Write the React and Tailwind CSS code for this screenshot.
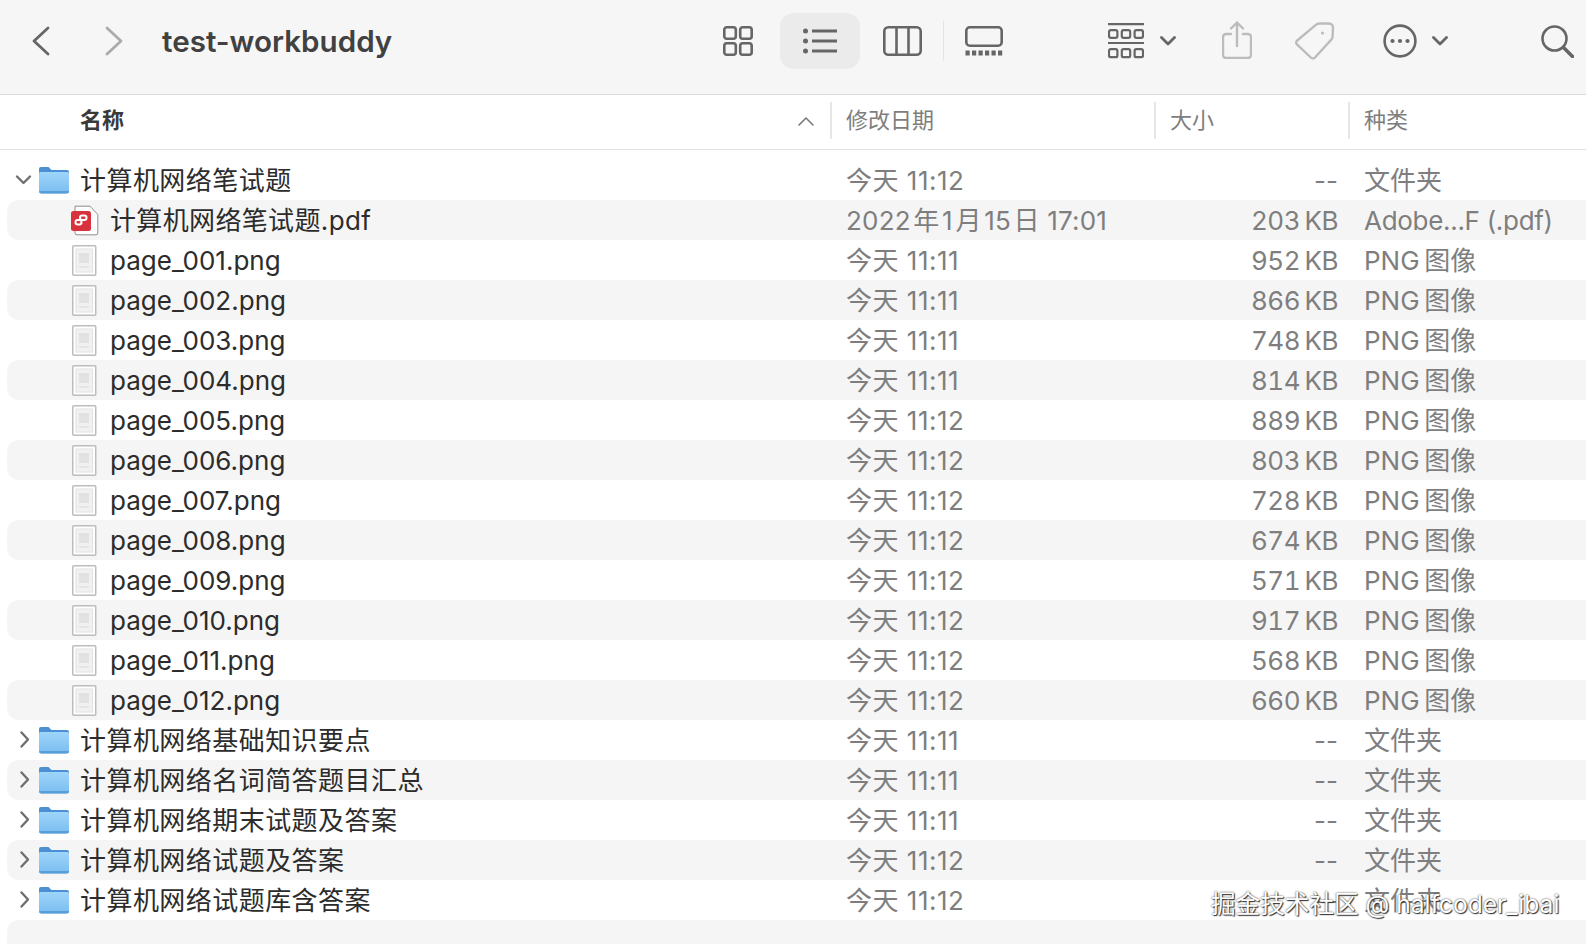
const FONT = '"Inter","Noto Sans CJK SC",sans-serif';

const rows = [
  { t: "folder", open: true, n: "计算机网络笔试题", d: "今天 11:12", s: "--", k: "文件夹" },
  { t: "pdf", n: "计算机网络笔试题.pdf", d: "2022\u200A年\u200A1\u200A月\u200A15\u200A日 17:01", s: "203\u2009KB", k: "Adobe...F (.pdf)" },
  { t: "png", n: "page_001.png", d: "今天 11:11", s: "952\u2009KB", k: "PNG\u2009图像" },
  { t: "png", n: "page_002.png", d: "今天 11:11", s: "866\u2009KB", k: "PNG\u2009图像" },
  { t: "png", n: "page_003.png", d: "今天 11:11", s: "748\u2009KB", k: "PNG\u2009图像" },
  { t: "png", n: "page_004.png", d: "今天 11:11", s: "814\u2009KB", k: "PNG\u2009图像" },
  { t: "png", n: "page_005.png", d: "今天 11:12", s: "889\u2009KB", k: "PNG\u2009图像" },
  { t: "png", n: "page_006.png", d: "今天 11:12", s: "803\u2009KB", k: "PNG\u2009图像" },
  { t: "png", n: "page_007.png", d: "今天 11:12", s: "728\u2009KB", k: "PNG\u2009图像" },
  { t: "png", n: "page_008.png", d: "今天 11:12", s: "674\u2009KB", k: "PNG\u2009图像" },
  { t: "png", n: "page_009.png", d: "今天 11:12", s: "571\u2009KB", k: "PNG\u2009图像" },
  { t: "png", n: "page_010.png", d: "今天 11:12", s: "917\u2009KB", k: "PNG\u2009图像" },
  { t: "png", n: "page_011.png", d: "今天 11:12", s: "568\u2009KB", k: "PNG\u2009图像" },
  { t: "png", n: "page_012.png", d: "今天 11:12", s: "660\u2009KB", k: "PNG\u2009图像" },
  { t: "folder", n: "计算机网络基础知识要点", d: "今天 11:11", s: "--", k: "文件夹" },
  { t: "folder", n: "计算机网络名词简答题目汇总", d: "今天 11:11", s: "--", k: "文件夹" },
  { t: "folder", n: "计算机网络期末试题及答案", d: "今天 11:11", s: "--", k: "文件夹" },
  { t: "folder", n: "计算机网络试题及答案", d: "今天 11:12", s: "--", k: "文件夹" },
  { t: "folder", n: "计算机网络试题库含答案", d: "今天 11:12", s: "--", k: "文件夹" },
];

const Folder = () => (
  <svg width="30" height="28" viewBox="0 0 30 28" className="shrink-0">
    <defs>
      <linearGradient id="fb" x1="0" y1="0" x2="0" y2="1">
        <stop offset="0" stopColor="#9ed5fa" />
        <stop offset="1" stopColor="#79bdf0" />
      </linearGradient>
    </defs>
    <path d="M0 3a2 2 0 0 1 2-2h7.5l3 3H28a2 2 0 0 1 2 2v6H0z" fill="#4a90d2" />
    <path d="M0 7.5a1.5 1.5 0 0 1 1.5-1.5h27A1.5 1.5 0 0 1 30 7.5V25a2.5 2.5 0 0 1-2.5 2.5h-25A2.5 2.5 0 0 1 0 25z" fill="url(#fb)" />
    <path d="M0 25V25a2.5 2.5 0 0 0 2.5 2.5h25A2.5 2.5 0 0 0 30 25z" fill="#5a9ed8" />
  </svg>
);

const PngIcon = () => (
  <svg width="25" height="31" viewBox="0 0 25 31" className="shrink-0">
    <rect x="0.75" y="0.75" width="23" height="29.5" rx="1" fill="#fff" stroke="#bdbdbd" strokeWidth="1.5" />
    <rect x="4" y="4" width="16.5" height="23" fill="#f1f1f1" stroke="#e2e2e2" strokeWidth="1" />
    <rect x="7" y="8" width="10" height="10" fill="#e2e2e2" />
    <rect x="7" y="21" width="10" height="2" fill="#e4e4e4" />
  </svg>
);

const PdfIcon = () => (
  <svg width="29" height="31" viewBox="0 0 29 31" className="shrink-0">
    <path d="M5 1.2h15l7.8 8.3V28a1.8 1.8 0 0 1-1.8 1.8H7A2 2 0 0 1 5 28z" fill="#fff" stroke="#8c8c8c" strokeWidth="1" />
    <rect x="1" y="6" width="20" height="20" rx="2.5" fill="#d8323c" />
    <g fill="none" stroke="#fff" strokeWidth="2">
      <rect x="10" y="10.5" width="6.5" height="4.5" rx="2.2" />
      <rect x="5.5" y="15" width="6" height="4.5" rx="2.2" />
    </g>
  </svg>
);

const Chevron = ({ open }) => (
  <svg width="20" height="20" viewBox="0 0 20 20" className="shrink-0" fill="none" stroke="#6f6f6f" strokeWidth="2.4" strokeLinecap="round" strokeLinejoin="round">
    {open ? <path d="M3 6.5l6.5 6.5L16 6.5" /> : <path d="M7.5 2.5L14 9.5l-6.5 7" />}
  </svg>
);

const Row = ({ r, i }) => (
  <div className={`ml-[7px] flex h-10 items-center rounded-l-[12px] ${i % 2 === 1 ? "bg-[#f5f5f5]" : "bg-white"}`}>
    <div className="flex w-[839px] items-center">
      {r.t === "folder" ? (
        <>
          <div className="flex w-[32px] justify-center pl-[1px]"><Chevron open={r.open} /></div>
          <Folder />
          <span className="ml-[11px] text-[26px] tracking-[0.45px] text-[#2c2c2c]">{r.n}</span>
        </>
      ) : (
        <>
          <div className={r.t === "pdf" ? "ml-[63px] w-[40px]" : "ml-[65px] w-[38px]"}>
            {r.t === "pdf" ? <PdfIcon /> : <PngIcon />}
          </div>
          <span className={`text-[26px] text-[#2c2c2c] ${r.t === "pdf" ? "tracking-[0.35px]" : ""}`}>{r.n}</span>
        </>
      )}
    </div>
    <div className={`w-[300px] text-[26px] text-[#7e7e7e] ${r.t === "pdf" ? "tracking-[0.2px]" : "tracking-[0.5px]"}`}>{r.d}</div>
    <div className={`w-[192px] text-right text-[26px] text-[#7e7e7e] ${r.s === "--" ? "" : "tracking-[-0.45px] tabular-nums"}`}>{r.s}</div>
    <div className={`pl-[26px] text-[26px] text-[#7e7e7e] ${r.t === "pdf" ? "tracking-[-0.3px]" : ""}`}>{r.k}</div>
  </div>
);

const stroke = { fill: "none", stroke: "currentColor", strokeWidth: 2.6 };

const Toolbar = () => (
  <div className="box-border flex h-[95px] items-center border-b border-[#dcdcdc] bg-[#f6f6f6] pb-[12px] pl-[32px] text-[#666666]">
    <svg width="18" height="30" viewBox="0 0 18 30" {...stroke} strokeWidth="2.8" strokeLinecap="round" strokeLinejoin="round"><path d="M16 2L2 15l14 13" /></svg>
    <svg width="18" height="30" viewBox="0 0 18 30" {...stroke} strokeWidth="2.8" strokeLinecap="round" strokeLinejoin="round" className="ml-[55px] text-[#ababab]"><path d="M2 2l14 13L2 28" /></svg>
    <div className="mt-[1px] ml-[39px] w-[561px] text-[29.6px] leading-none font-semibold text-[#414141]">test-workbuddy</div>
    <svg width="30" height="30" viewBox="0 0 30 30" {...stroke}><rect x="1.3" y="1.3" width="11.5" height="11.5" rx="2.5" /><rect x="17.2" y="1.3" width="11.5" height="11.5" rx="2.5" /><rect x="1.3" y="17.2" width="11.5" height="11.5" rx="2.5" /><rect x="17.2" y="17.2" width="11.5" height="11.5" rx="2.5" /></svg>
    <div className="ml-[27px] flex h-[56px] w-[80px] items-center justify-center rounded-[14px] bg-[#ebebeb]">
      <svg width="34" height="26" viewBox="0 0 34 26"><g fill="currentColor"><circle cx="2.5" cy="3" r="2.5" /><circle cx="2.5" cy="13" r="2.5" /><circle cx="2.5" cy="23" r="2.5" /></g><g stroke="currentColor" strokeWidth="2.8"><path d="M9 3h25M9 13h25M9 23h25" /></g></svg>
    </div>
    <svg width="39" height="30" viewBox="0 0 39 30" {...stroke} className="ml-[23px]"><rect x="1.3" y="1.3" width="36.4" height="27.4" rx="4" /><path d="M13.5 1.3v27.4M25.5 1.3v27.4" /></svg>
    <div className="ml-[21px] h-[40px] w-px bg-[#e4e4e4]" />
    <svg width="38" height="30" viewBox="0 0 38 30" className="ml-[21px]"><rect x="1.3" y="1.3" width="35.4" height="18.4" rx="3.5" fill="none" stroke="currentColor" strokeWidth="2.6" /><g fill="currentColor"><rect x="0.5" y="24.5" width="4.2" height="5" /><rect x="7" y="24.5" width="4.2" height="5" /><rect x="13.5" y="24.5" width="4.2" height="5" /><rect x="20" y="24.5" width="4.2" height="5" /><rect x="26.5" y="24.5" width="4.2" height="5" /><rect x="33" y="24.5" width="4.2" height="5" /></g></svg>
    <svg width="36" height="36" viewBox="0 0 36 36" className="ml-[105px]" fill="none" stroke="currentColor" strokeWidth="2.2"><path d="M0 1.2h36M0 20h36" /><g><rect x="1" y="7.2" width="8.4" height="7.6" rx="1.8" /><rect x="13.8" y="7.2" width="8.4" height="7.6" rx="1.8" /><rect x="26.6" y="7.2" width="8.4" height="7.6" rx="1.8" /><rect x="1" y="26.2" width="8.4" height="8" rx="1.8" /><rect x="13.8" y="26.2" width="8.4" height="8" rx="1.8" /><rect x="26.6" y="26.2" width="8.4" height="8" rx="1.8" /></g></svg>
    <svg width="16" height="10" viewBox="0 0 16 10" className="ml-[16px]" fill="none" stroke="currentColor" strokeWidth="2.8" strokeLinecap="round" strokeLinejoin="round"><path d="M1.5 1.5L8 8l6.5-6.5" /></svg>
    <svg width="30" height="38" viewBox="0 0 30 38" className="-mt-[3px] ml-[46px] text-[#bcbcbc]" fill="none" stroke="currentColor" strokeWidth="2.4" strokeLinecap="round" strokeLinejoin="round"><path d="M9 13H4a3 3 0 0 0-3 3v18a3 3 0 0 0 3 3h22a3 3 0 0 0 3-3V16a3 3 0 0 0-3-3h-5" /><path d="M15 25V1.5M9 7.5l6-6 6 6" /></svg>
    <svg width="40" height="38" viewBox="0 0 40 38" className="ml-[43px] text-[#bcbcbc]" fill="none" stroke="currentColor" strokeWidth="2.4" strokeLinejoin="round"><path d="M25 1.5h9a4 4 0 0 1 4 4l-.4 9a5 5 0 0 1-1.5 3.4L20 35.5a3 3 0 0 1-4.2 0L2.2 22.7a3 3 0 0 1 0-4.2L20.5 3.2A6 6 0 0 1 25 1.5z" /><circle cx="27.5" cy="11" r="1.6" fill="currentColor" stroke="none" /></svg>
    <svg width="34" height="34" viewBox="0 0 34 34" className="ml-[48px]"><circle cx="17" cy="17" r="15.4" fill="none" stroke="currentColor" strokeWidth="2.6" /><g fill="currentColor"><circle cx="9.5" cy="17" r="2.1" /><circle cx="17" cy="17" r="2.1" /><circle cx="24.5" cy="17" r="2.1" /></g></svg>
    <svg width="16" height="10" viewBox="0 0 16 10" className="ml-[15px]" fill="none" stroke="currentColor" strokeWidth="2.8" strokeLinecap="round" strokeLinejoin="round"><path d="M1.5 1.5L8 8l6.5-6.5" /></svg>
    <svg width="33" height="33" viewBox="0 0 33 33" className="ml-[93px]" fill="none" stroke="currentColor" strokeLinecap="round"><circle cx="13.5" cy="13.5" r="12" strokeWidth="2.6" /><path d="M22.5 22.5l9 9" strokeWidth="3.6" /></svg>
  </div>
);

const Header = () => (
  <div className="box-border flex h-[55px] items-center border-b border-[#e0e0e0] bg-white pb-[3px] text-[22px] text-[#7e7e7e]">
    <div className="flex w-[830px] items-center justify-between pr-[15px] pl-[80px]">
      <span className="font-semibold text-[#3a3a3a]">名称</span>
      <svg width="18" height="10" viewBox="0 0 18 10" fill="none" stroke="#7a7a7a" strokeWidth="1.6" strokeLinecap="round" strokeLinejoin="round"><path d="M2 9l7-7 7 7" /></svg>
    </div>
    <div className="flex h-[37px] w-[324px] items-center border-l-2 border-[#e6e6e6] pl-[14px]">修改日期</div>
    <div className="flex h-[37px] w-[194px] items-center border-l-2 border-[#e6e6e6] pl-[14px]">大小</div>
    <div className="flex h-[37px] items-center border-l-2 border-[#e6e6e6] pl-[14px]">种类</div>
  </div>
);

export default function App() {
  return (
    <div className="relative h-[944px] w-full overflow-hidden bg-white" style={{ fontFamily: FONT }}>
      <Toolbar />
      <Header />
      <div className="pt-[10px]">
        {rows.map((r, i) => <Row key={r.n} r={r} i={i} />)}
        <div className="ml-[7px] h-10 rounded-l-[12px] bg-[#f5f5f5]" />
      </div>
      <div className="absolute top-[886px] left-[1211px] text-[24.6px] whitespace-nowrap text-white [text-shadow:0_0_2px_#333,1px_1px_1px_#333]">掘金技术社区 @ halfcoder_ibai</div>
    </div>
  );
}
